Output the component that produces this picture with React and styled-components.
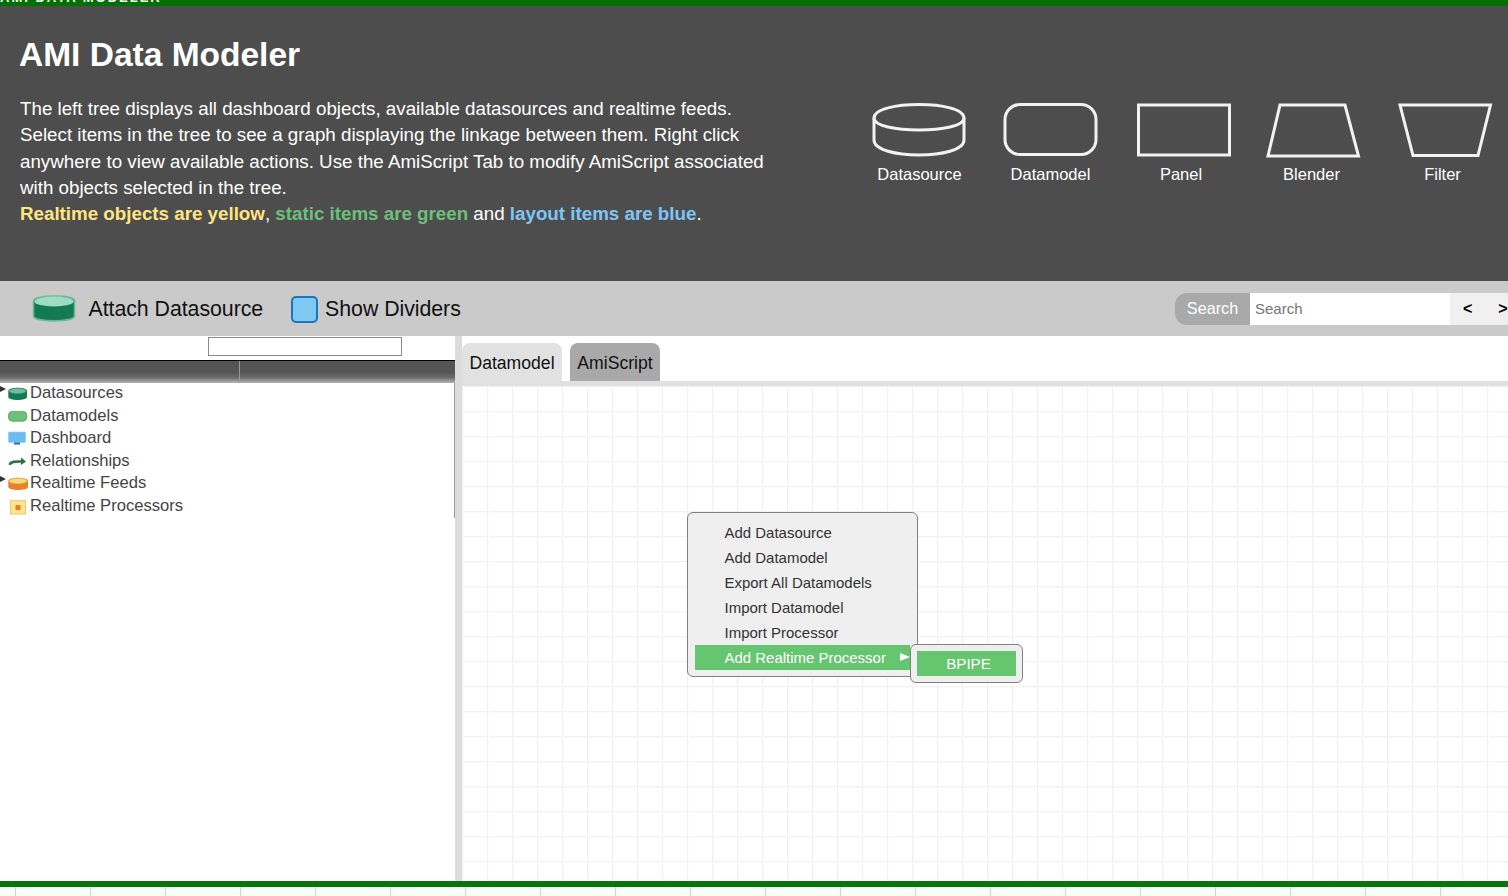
import React from "react";
import styled, { createGlobalStyle } from "styled-components";

const Global = createGlobalStyle`
  html, body { margin: 0; padding: 0; background: #fff; overflow: hidden; }
  * { box-sizing: border-box; }
`;

const Page = styled.div`
  width: 1508px; height: 896px; overflow: hidden;
  display: flex; flex-direction: column;
  font-family: "Liberation Sans", Arial, sans-serif;
`;
const TopBar = styled.div`
  height: 6px; flex: none; background: #007000; overflow: hidden;
  display: flex; align-items: flex-end;
`;
const TopLabel = styled.span`
  color: #fff; font-size: 13px; font-weight: bold; line-height: 10px; letter-spacing: 2px;
  white-space: nowrap; margin-bottom: 3px;
`;
const Header = styled.header`
  height: 275px; flex: none; background: #4d4d4d; color: #fff;
  display: flex; justify-content: space-between; padding: 29px 16px 0 20px;
`;
const Intro = styled.div` width: 780px; `;
const Title = styled.h1`
  margin: 0 0 22px -1px; font-size: 33.5px; line-height: 39px; font-weight: bold; white-space: nowrap;
`;
const Para = styled.div`
  font-size: 18.75px; line-height: 26.3px; white-space: nowrap;
`;
const Hl = styled.b` color: ${p => p.$c}; `;
const Legend = styled.div`
  display: flex; gap: 35px; padding-top: 68px;
`;
const LegendItem = styled.div`
  width: 96px; display: flex; flex-direction: column; align-items: center;
  font-size: 16.5px; line-height: 18px; color: #fff;
`;
const LegendLabel = styled.span` margin-top: 8px; margin-left: ${p => p.$ml || 0}px; white-space: nowrap; `;
const Toolbar = styled.div`
  height: 55px; flex: none; background: #cacaca; display: flex; align-items: center;
  padding-left: 32px;
`;
const ToolLabel = styled.span`
  font-size: 21.33px; color: #111; white-space: nowrap; padding-top: 2px;
  letter-spacing: ${p => p.$ls || 0}px;
`;
const AttachLabel = styled(ToolLabel)` margin-left: 12.5px; `;
const Check = styled.span`
  width: 27px; height: 27px; margin: 2px 7px 0 28px; flex: none;
  background: #7dc9f4; border: 2px solid #1a76b8; border-radius: 5px;
`;
const SearchGroup = styled.div`
  margin-left: auto; display: flex; height: 32px; width: 333px; flex: none;
`;
const SearchLabel = styled.div`
  width: 75px; background: #a9a9a9; color: #fff; font-size: 16.2px;
  border-radius: 12px 0 0 12px; display: flex; align-items: center; justify-content: center;
`;
const SearchInput = styled.input`
  width: 200px; border: 0; outline: 0; padding: 0 5px; background: #fff;
  font: 15px "Liberation Sans", Arial, sans-serif; color: #333;
  &::placeholder { color: #757575; opacity: 1; }
`;
const Arrows = styled.div`
  flex: 1; background: #f0f0f0; display: flex; font-size: 16px; font-weight: bold; color: #000;
  align-items: center; padding-left: 13px; gap: 26px;
`;
const Body = styled.div` flex: 1; min-height: 0; display: flex; `;
const LeftPane = styled.div` width: 455px; flex: none; display: flex; flex-direction: column; background: #fff; `;
const FilterRow = styled.div` height: 24px; flex: none; padding: 1px 0 0 208px; `;
const FilterInput = styled.input`
  display: block; width: 194px; height: 19px; border: 1px solid #8a8a8a; background: #fff; padding: 0; outline: 0;
`;
const TableHead = styled.div`
  height: 23px; flex: none; border-top: 1px solid #000;
  background: linear-gradient(#555 0, #555 50%, #6b6b6b 75%, #b5b5b5 100%);
  padding-left: 239px;
`;
const HeadSep = styled.div` width: 1px; height: 100%; background: #999; `;
const TreeWrap = styled.div`
  height: 135px; flex: none; border-right: 1px solid #9c9c9c;
  display: grid; grid-auto-rows: 22.5px;
`;
const TreeRow = styled.div`
  position: relative; display: flex; align-items: center; padding: 0 0 2px 8px;
  font-size: 16.6px; color: #444; white-space: nowrap;
`;
const Caret = styled.span`
  position: absolute; left: 0; top: 3px; width: 0; height: 0;
  border-left: 6px solid #333; border-top: 3px solid transparent; border-bottom: 3px solid transparent;
`;
const TreeIcon = styled.svg` width: 20px; height: 18px; flex: none; margin-right: 2px; `;
const Divider = styled.div` width: 7px; flex: none; background: #dcdcdc; `;
const RightPane = styled.div` flex: 1; min-width: 0; display: flex; flex-direction: column; `;
const Tabs = styled.div`
  height: 50px; flex: none; padding-top: 7px; display: flex; gap: 8px; align-items: flex-start;
  border-bottom: 5px solid #e0e0e0;
`;
const Tab = styled.div`
  height: 38px; width: ${p => p.$w}px; padding-top: 2px; border-radius: 8px 8px 0 0;
  background: ${p => (p.$active ? "#e2e2e2" : "#a9a9a9")};
  display: flex; align-items: center; justify-content: center; font-size: 17.6px; color: #111;
`;
const Canvas = styled.div`
  flex: 1; position: relative; background-color: #fff;
  background-image:
    linear-gradient(to right, #f1f1f1 1px, #fbfbfb 1px, #fbfbfb 2px, transparent 2px),
    linear-gradient(to bottom, #f1f1f1 1px, #fbfbfb 1px, #fbfbfb 2px, transparent 2px);
  background-size: 25px 25px;
`;
const Menu = styled.div`
  position: absolute; left: 225px; top: 126px; width: 231px; height: 165px;
  background: #efefef; border: 1px solid #808080; border-radius: 6px; padding: 7px 7px 0;
`;
const MenuItem = styled.div`
  position: relative; height: 25px; padding-left: 29.5px; display: flex; align-items: center;
  font-size: 14.97px; white-space: nowrap;
  color: ${p => (p.$on ? "#fff" : "#333")};
  background: ${p => (p.$on ? "#66c56f" : "transparent")};
`;
const SubArrow = styled.span`
  position: absolute; right: 0; top: 8px; width: 0; height: 0;
  border-left: 10px solid #fff; border-top: 4px solid transparent; border-bottom: 4px solid transparent;
`;
const SubMenu = styled.div`
  position: absolute; left: 448px; top: 258px; width: 113px; height: 39px;
  background: #efefef; border: 1px solid #808080; border-radius: 6px; padding: 6px;
`;
const SubItem = styled.div`
  height: 25px; padding-left: 4px; background: #66c56f; color: #fff; font-size: 15.2px;
  display: flex; align-items: center; justify-content: center;
`;
const Footer = styled.div`
  height: 15px; flex: none; border-top: 6px solid #077507;
  background-color: #f8fff8;
  background-image: linear-gradient(to right, #b4ecb4 1px, transparent 1px);
  background-size: 75px 100%;
  background-position: 15px 0;
`;

const S = { fill: "none", stroke: "#f2f2f2", strokeWidth: 3 };
const shapes = [
  { label: "Datasource", ml: -1, d: <><path d="M2 15 C2 -3 92 -3 92 15 V37 C92 57 2 57 2 37 Z" {...S}/><path d="M2 15 C2 31 92 31 92 15" {...S}/></> },
  { label: "Datamodel", ml: -1, d: <rect x="2" y="1.5" width="91" height="50" rx="15" {...S}/> },
  { label: "Panel", ml: -2, d: <rect x="4.5" y="2" width="91" height="50" {...S}/> },
  { label: "Blender", ml: -3, d: <path d="M15 2 H80 L93.5 53 H3 Z" {...S}/> },
  { label: "Filter", ml: -3, d: <path d="M4 2 H94.5 L82 52.5 H17 Z" {...S}/> },
];

const Shape = styled.svg` width: 96px; height: 54px; display: block; overflow: visible; `;

const Cyl = ({ top, body, light, w = 19 }) => (
  <TreeIcon viewBox="0 0 20 18">
    <path d={`M0.3 7 C0.3 2.8 ${w} 2.8 ${w} 7 V13 C${w} 17 0.3 17 0.3 13 Z`} fill={body} />
    <ellipse cx={w / 2} cy="7" rx={w / 2 - 1.2} ry="2.6" fill={top} stroke={light} strokeWidth=".6" />
  </TreeIcon>
);
const icons = {
  ds: <Cyl top="#6fbfa0" body="#147a55" light="#4da585" />,
  dm: <TreeIcon viewBox="0 0 20 18"><rect x="0.4" y="4.4" width="18.4" height="9.8" rx="4" fill="#6cc07a" stroke="#4ea35c" strokeWidth=".8"/></TreeIcon>,
  dash: <TreeIcon viewBox="0 0 20 18"><rect x="0.3" y="3" width="17.4" height="10.5" rx="1" fill="#6cbcf0" stroke="#9ad2f6" strokeWidth=".6"/><rect x="6" y="13.5" width="6" height="2" fill="#1b6fb0"/></TreeIcon>,
  rel: <TreeIcon viewBox="0 0 20 18"><path d="M1.5 12.8 C3 9 8 9.5 14 9.5" fill="none" stroke="#2f6f3e" strokeWidth="2.6"/><path d="M13 5.5 L18 9.5 L13 13 Z" fill="#2f6f3e"/></TreeIcon>,
  rt: <Cyl top="#f6dc7e" body="#ec7f2a" light="#e8c860" w={20} />,
  proc: <TreeIcon viewBox="0 0 20 18"><rect x="2.5" y="3.7" width="15" height="13.3" fill="#fbe590" stroke="#e6cb6a"/><rect x="7.5" y="8" width="5" height="5" fill="#f0782a"/></TreeIcon>,
};
const tree = [
  ["Datasources", "ds", true], ["Datamodels", "dm"], ["Dashboard", "dash"],
  ["Relationships", "rel"], ["Realtime Feeds", "rt", true], ["Realtime Processors", "proc"],
];
const items = ["Add Datasource", "Add Datamodel", "Export All Datamodels", "Import Datamodel", "Import Processor"];

export default function App() {
  return (
    <Page>
      <Global />
      <TopBar><TopLabel>AMI DATA MODELER</TopLabel></TopBar>
      <Header>
        <Intro>
          <Title>AMI Data Modeler</Title>
          <Para>
            The left tree displays all dashboard objects, available datasources and realtime feeds.<br />
            Select items in the tree to see a graph displaying the linkage between them. Right click<br />
            anywhere to view available actions. Use the AmiScript Tab to modify AmiScript associated<br />
            with objects selected in the tree.<br />
            <Hl $c="#ffe680">Realtime objects are yellow</Hl>, <Hl $c="#6cc07a">static items are green</Hl> and <Hl $c="#7fc6f7">layout items are blue</Hl>.
          </Para>
        </Intro>
        <Legend>
          {shapes.map(s => (
            <LegendItem key={s.label}>
              <Shape viewBox="0 0 96 54">{s.d}</Shape>
              <LegendLabel $ml={s.ml}>{s.label}</LegendLabel>
            </LegendItem>
          ))}
        </Legend>
      </Header>
      <Toolbar>
        <svg width="44" height="29" viewBox="0 0 44 29">
          <path d="M1.5 7 C1.5 0.5 42.5 0.5 42.5 7 V22 C42.5 28.5 1.5 28.5 1.5 22 Z" fill="#137a55" stroke="#6db89b" strokeWidth="1.6"/>
          <ellipse cx="22" cy="7.5" rx="19.5" ry="5" fill="#9fdcc5"/>
        </svg>
        <AttachLabel $ls={-0.05}>Attach Datasource</AttachLabel>
        <Check />
        <ToolLabel $ls={-0.05}>Show Dividers</ToolLabel>
        <SearchGroup>
          <SearchLabel>Search</SearchLabel>
          <SearchInput placeholder="Search" />
          <Arrows><span>&lt;</span><span>&gt;</span></Arrows>
        </SearchGroup>
      </Toolbar>
      <Body>
        <LeftPane>
          <FilterRow><FilterInput /></FilterRow>
          <TableHead><HeadSep /></TableHead>
          <TreeWrap>
            {tree.map(([t, ic, c]) => (
              <TreeRow key={t}>{c && <Caret />}{icons[ic]}{t}</TreeRow>
            ))}
          </TreeWrap>
        </LeftPane>
        <Divider />
        <RightPane>
          <Tabs>
            <Tab $active $w={100}>Datamodel</Tab>
            <Tab $w={90}>AmiScript</Tab>
          </Tabs>
          <Canvas>
            <Menu>
              {items.map(i => <MenuItem key={i}>{i}</MenuItem>)}
              <MenuItem $on>Add Realtime Processor<SubArrow /></MenuItem>
            </Menu>
            <SubMenu><SubItem>BPIPE</SubItem></SubMenu>
          </Canvas>
        </RightPane>
      </Body>
      <Footer />
    </Page>
  );
}
